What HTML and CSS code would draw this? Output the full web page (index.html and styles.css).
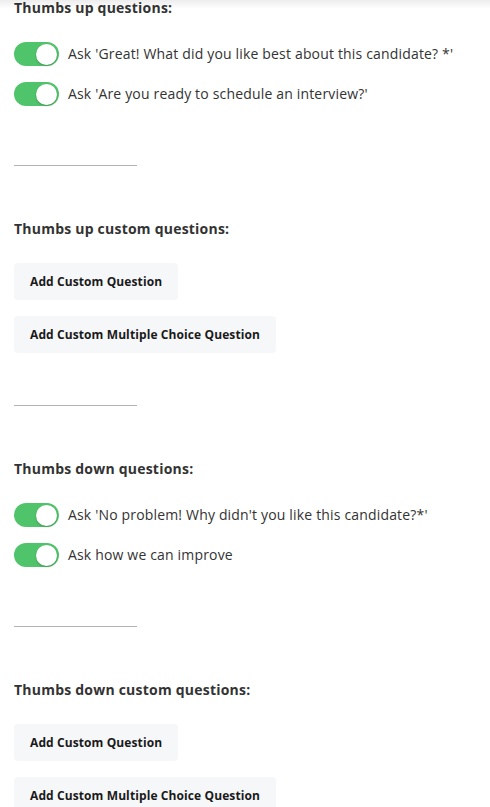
FILE: index.html
```html
<!DOCTYPE html>
<html lang="en">
<head>
<meta charset="utf-8">
<title>Feedback questions</title>
<link rel="stylesheet" href="styles.css">
</head>
<body>
<div class="top-shadow"></div>
<main class="page">
  <section class="group">
    <h3 class="heading">Thumbs up questions:</h3>
    <div class="toggles">
      <label class="toggle-row"><span class="switch"><span class="knob"></span></span><span class="label">Ask 'Great! What did you like best about this candidate? *'</span></label>
      <label class="toggle-row"><span class="switch"><span class="knob"></span></span><span class="label">Ask 'Are you ready to schedule an interview?'</span></label>
    </div>
  </section>
  <hr class="divider after-toggles">
  <section class="group">
    <h3 class="heading">Thumbs up custom questions:</h3>
    <div class="buttons">
      <button class="btn">Add Custom Question</button>
      <button class="btn">Add Custom Multiple Choice Question</button>
    </div>
  </section>
  <hr class="divider after-buttons">
  <section class="group">
    <h3 class="heading">Thumbs down questions:</h3>
    <div class="toggles">
      <label class="toggle-row"><span class="switch"><span class="knob"></span></span><span class="label">Ask 'No problem! Why didn't you like this candidate?*'</span></label>
      <label class="toggle-row"><span class="switch"><span class="knob"></span></span><span class="label">Ask how we can improve</span></label>
    </div>
  </section>
  <hr class="divider after-toggles">
  <section class="group">
    <h3 class="heading">Thumbs down custom questions:</h3>
    <div class="buttons">
      <button class="btn">Add Custom Question</button>
      <button class="btn">Add Custom Multiple Choice Question</button>
    </div>
  </section>
</main>
</body>
</html>
```

FILE: styles.css
```css
html, body {
  margin: 0;
  padding: 0;
  background: #ffffff;
}
body {
  font-family: "Open Sans", "Noto Sans", sans-serif;
  color: #333333;
  overflow: hidden;
}
.top-shadow {
  position: fixed;
  top: 0;
  left: 0;
  right: 0;
  height: 9px;
  background: linear-gradient(to bottom, rgba(0,0,0,0.07), rgba(0,0,0,0));
  pointer-events: none;
  z-index: 5;
}
.page {
  margin-top: -2px;
  padding: 0 14px;
  display: flex;
  flex-direction: column;
  align-items: flex-start;
}
.group {
  display: flex;
  flex-direction: column;
  align-items: flex-start;
}
.heading {
  margin: 0;
  font-size: 14px;
  line-height: 20px;
  font-weight: 700;
  letter-spacing: 0.22px;
  color: #333333;
}
.toggles {
  margin-top: 24px;
  display: flex;
  flex-direction: column;
  gap: 16px;
}
.toggle-row {
  display: flex;
  align-items: center;
  gap: 9px;
  height: 24px;
}
.switch {
  width: 45px;
  height: 24px;
  border-radius: 12px;
  background: #50c46a;
  display: flex;
  align-items: center;
  justify-content: flex-end;
  padding-right: 2px;
  box-sizing: border-box;
  flex: none;
}
.knob {
  width: 21px;
  height: 21px;
  border-radius: 50%;
  background: #ffffff;
  box-shadow: 0 1px 2px rgba(0,0,0,0.25);
}
.label {
  font-size: 14px;
  line-height: 20px;
  letter-spacing: 0.17px;
  color: #333333;
}
.divider {
  align-self: flex-start;
  width: 123px;
  height: 1px;
  border: 0;
  background: #b3b3b3;
  margin: 0 0 53px 0;
}
.divider.after-toggles {
  margin-top: 59px;
}
.divider.after-buttons {
  margin-top: 52px;
}
.buttons {
  margin-top: 24px;
  display: flex;
  flex-direction: column;
  align-items: flex-start;
  gap: 16px;
}
.btn {
  font-family: "Open Sans", "Noto Sans", sans-serif;
  font-size: 12px;
  line-height: 17px;
  font-weight: 700;
  letter-spacing: 0.1px;
  color: #1a1a1a;
  background: #f6f7f9;
  border: 0;
  border-radius: 4px;
  padding: 10px 16px;
  margin: 0;
}
```
